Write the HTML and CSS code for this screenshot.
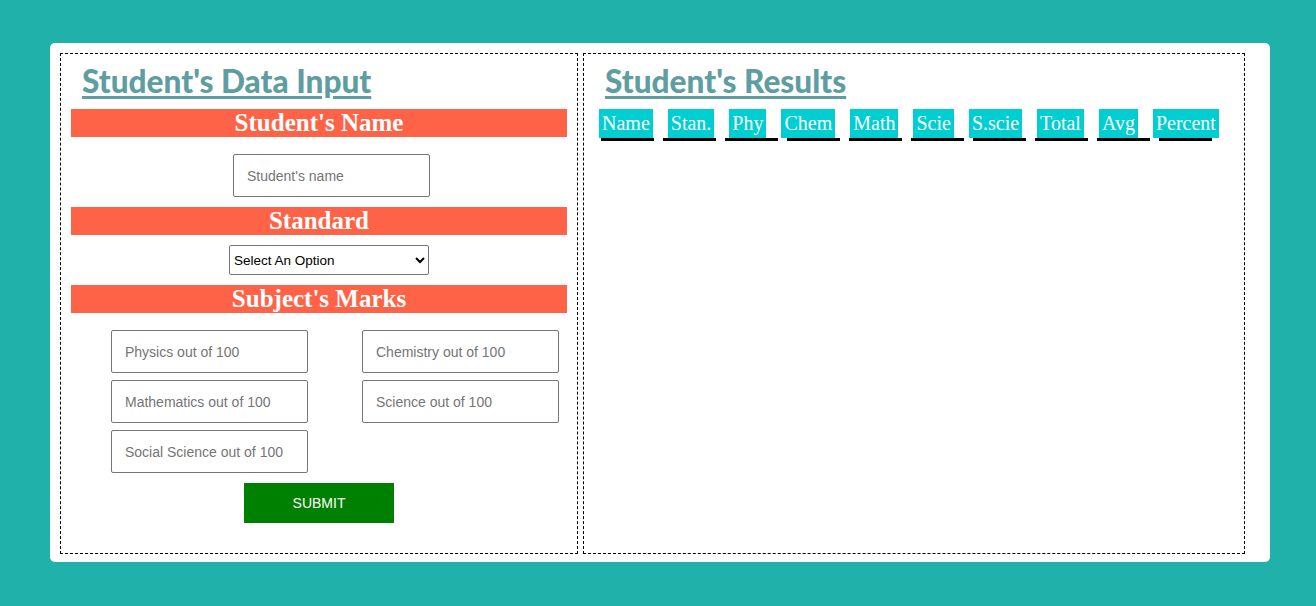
FILE: index.html
```html
<!DOCTYPE html>
<html>
<head>
<meta charset="utf-8">
<link rel="stylesheet" href="styles.css">
</head>
<body>
<div class="page">
  <div class="card">
    <section class="panel panel-input">
      <h1 class="title">Student's Data Input</h1>
      <h2 class="bar">Student's Name</h2>
      <div class="row row-name">
        <input class="field" type="text" placeholder="Student's name">
      </div>
      <h2 class="bar">Standard</h2>
      <div class="row row-select">
        <select class="select">
          <option>Select An Option</option>
        </select>
      </div>
      <h2 class="bar">Subject's Marks</h2>
      <div class="marks">
        <input class="field" type="text" placeholder="Physics out of 100">
        <input class="field" type="text" placeholder="Chemistry out of 100">
        <input class="field" type="text" placeholder="Mathematics out of 100">
        <input class="field" type="text" placeholder="Science out of 100">
        <input class="field" type="text" placeholder="Social Science out of 100">
      </div>
      <div class="row row-submit">
        <button class="submit">SUBMIT</button>
      </div>
    </section>
    <section class="panel panel-results">
      <h1 class="title">Student's Results</h1>
      <div class="thead">
        <span class="lbl">Name</span>
        <span class="lbl">Stan.</span>
        <span class="lbl">Phy</span>
        <span class="lbl">Chem</span>
        <span class="lbl">Math</span>
        <span class="lbl">Scie</span>
        <span class="lbl">S.scie</span>
        <span class="lbl">Total</span>
        <span class="lbl">Avg</span>
        <span class="lbl">Percent</span>
      </div>
      <div class="rules">
        <span class="rule"></span>
        <span class="rule"></span>
        <span class="rule"></span>
        <span class="rule"></span>
        <span class="rule"></span>
        <span class="rule"></span>
        <span class="rule"></span>
        <span class="rule"></span>
        <span class="rule"></span>
        <span class="rule"></span>
      </div>
    </section>
  </div>
</div>
</body>
</html>
```
FILE: styles.css
```css
* { box-sizing: border-box; }
html, body { margin: 0; padding: 0; }
body {
  background: #20b2aa;
  width: 1316px;
  height: 606px;
  overflow: hidden;
}
.page {
  padding: 43px 46px 0 50px;
}
.card {
  background: #fff;
  border-radius: 5px;
  width: 1220px;
  height: 519px;
  padding: 10px;
  display: flex;
  gap: 5px;
}
.panel {
  border: 1px dashed #000;
  height: 501px;
}
.panel-input {
  width: 518px;
  padding: 0 10px;
}
.panel-results {
  width: 662px;
}
.title {
  margin: 0;
  padding: 10px 0 0 11px;
  height: 55px;
  font-family: "Lato", "Open Sans", sans-serif;
  font-weight: 900;
  font-size: 31.6px;
  line-height: 35px;
  color: #5f9ea0;
  text-decoration: underline;
  text-decoration-thickness: 3px;
  text-underline-offset: 3px;
}
.panel-results .title {
  padding-left: 21px;
}
.bar {
  margin: 0;
  height: 28px;
  background: #ff6347;
  color: #fff;
  text-align: center;
  font-family: "Liberation Serif", "Times New Roman", serif;
  font-weight: 700;
  font-size: 25px;
  line-height: 28px;
}
.row {
  display: flex;
  justify-content: center;
}
.row-name { padding: 17px 0 10px 25px; }
.row-select { padding: 10px 0 10px 20px; }
.row-submit { padding-top: 10px; }
.field {
  width: 197px;
  height: 43px;
  border: 1px solid #767676;
  border-radius: 2px;
  padding: 0 0 0 13px;
  font-family: "Liberation Sans", Arial, sans-serif;
  font-size: 14px;
  color: #000;
  background: #fff;
  outline: none;
}
.field::placeholder { color: #757575; }
.select {
  width: 200px;
  height: 30px;
  border: 1px solid #767676;
  border-radius: 2px;
  font-family: "Liberation Sans", Arial, sans-serif;
  font-size: 13.5px;
  color: #000;
  background: #fff;
}
.marks {
  display: grid;
  grid-template-columns: 197px 197px;
  column-gap: 54px;
  row-gap: 7px;
  padding: 17px 0 0 40px;
}
.submit {
  width: 150px;
  height: 40px;
  background: #008000;
  color: #fff;
  border: none;
  font-family: "Liberation Sans", Arial, sans-serif;
  font-size: 14px;
  padding: 0;
}
.thead {
  display: flex;
  gap: 15px;
  padding-left: 15px;
}
.lbl {
  background: #00ced1;
  color: #fff;
  font-family: "Liberation Serif", "Times New Roman", serif;
  font-size: 20px;
  line-height: 23px;
  padding: 3px 3px;
  white-space: nowrap;
}
.rules {
  display: flex;
  gap: 9px;
  padding-left: 17px;
}
.rule {
  width: 53px;
  height: 3px;
  background: #000;
}
```
